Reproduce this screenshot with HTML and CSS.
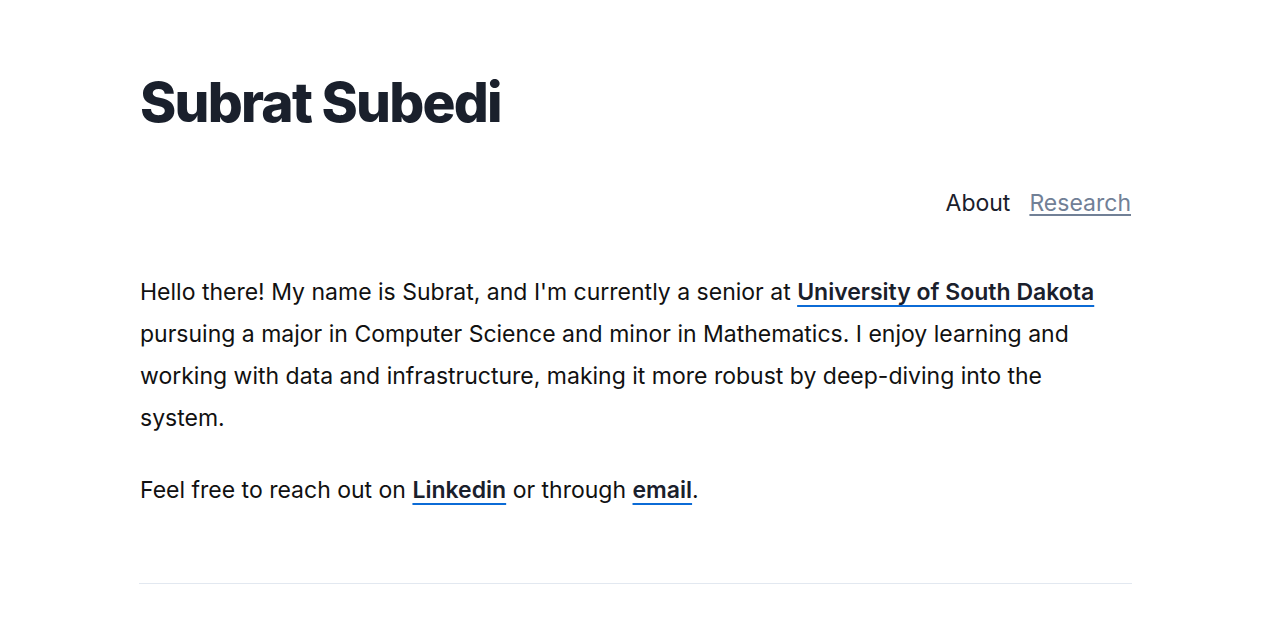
FILE: index.html
```html
<!DOCTYPE html>
<html lang="en">
<head>
<meta charset="utf-8">
<title>Subrat Subedi</title>
<link rel="stylesheet" href="styles.css">
</head>
<body>
<div class="page">
  <header class="header">
    <h1 class="title">Subrat Subedi</h1>
    <nav class="nav">
      <a class="nav-link nav-current" href="#">About</a>
      <a class="nav-link nav-other" href="#">Research</a>
    </nav>
  </header>
  <main class="content">
    <p class="para">Hello there! My name is Subrat, and I'm currently a senior at <a class="strong-link" href="#">University of South Dakota</a> pursuing a major in Computer Science and minor in Mathematics. I enjoy learning and working with data and infrastructure, making it more robust by deep-diving into the system.</p>
    <p class="para">Feel free to reach out on <a class="strong-link" href="#">Linkedin</a> or through <a class="strong-link" href="#">email</a>.</p>
  </main>
  <hr class="rule">
</div>
</body>
</html>
```

FILE: styles.css
```css
html, body {
  margin: 0;
  padding: 0;
  background: #ffffff;
}
body {
  font-family: Inter, "Noto Sans", sans-serif;
  color: #111111;
}
.page {
  width: 992px;
  margin-left: 140px;
  padding-top: 70px;
}
.header {
  display: flex;
  flex-direction: column;
}
.title {
  margin: 0;
  font-size: 55px;
  font-weight: 800;
  letter-spacing: -0.032em;
  line-height: 64px;
  color: #1a202c;
}
.nav {
  display: flex;
  justify-content: flex-end;
  gap: 19px;
  margin-top: 53px;
  padding-right: 1px;
  font-size: 23px;
  line-height: 32px;
}
.nav-link {
  text-decoration: none;
}
.nav-current {
  color: #1a202c;
}
.nav-other {
  color: #718096;
  text-decoration: underline;
  text-decoration-thickness: 2px;
  text-underline-offset: 3px;
}
.content {
  margin-top: 52px;
}
.para {
  margin: 0 0 30px 0;
  font-size: 23px;
  line-height: 42px;
  color: #111111;
}
.strong-link {
  color: #1a202c;
  font-weight: 600;
  text-decoration: underline;
  text-decoration-color: #0b6bd6;
  text-decoration-thickness: 2px;
  text-underline-offset: 5px;
}
.rule {
  margin: 72px 0 0 -1px;
  border: 0;
  border-top: 1px solid #e2e8f0;
}
```
